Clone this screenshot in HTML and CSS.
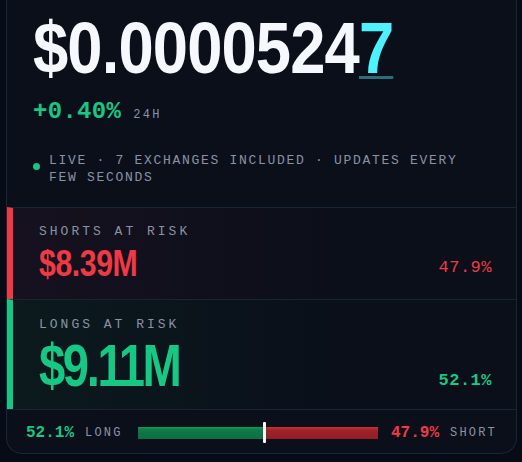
FILE: index.html
```html
<!DOCTYPE html>
<html lang="en">
<head>
<meta charset="utf-8">
<title>Liquidations</title>
<link rel="stylesheet" href="styles.css">
</head>
<body>
<div class="card">
  <div class="head">
    <div class="price"><span class="cond">$0.0000524<span class="tick">7</span></span></div>
    <div class="change"><span class="pct">+0.40%</span><span class="period">24H</span></div>
    <div class="live"><span class="dot"></span><span class="live-text">LIVE · 7 EXCHANGES INCLUDED · UPDATES EVERY FEW SECONDS</span></div>
  </div>
  <div class="risk shorts">
    <div class="risk-main">
      <div class="label">SHORTS AT RISK</div>
      <div class="value"><span class="cond">$8.39M</span></div>
    </div>
    <div class="share">47.9%</div>
  </div>
  <div class="risk longs">
    <div class="risk-main">
      <div class="label">LONGS AT RISK</div>
      <div class="value"><span class="cond">$9.11M</span></div>
    </div>
    <div class="share">52.1%</div>
  </div>
  <div class="ratio">
    <span class="r-pct green">52.1%</span>
    <span class="r-lbl">LONG</span>
    <div class="track">
      <div class="fill-long" style="width:52.1%"></div>
      <div class="marker"></div>
      <div class="fill-short"></div>
    </div>
    <span class="r-pct red">47.9%</span>
    <span class="r-lbl">SHORT</span>
  </div>
</div>
</body>
</html>
```
FILE: styles.css
```css
* { box-sizing: border-box; }
html, body { margin: 0; padding: 0; }
body {
  background: #070b15;
  padding: 0 5px 8px 6px;
  font-family: "Liberation Mono", "DejaVu Sans Mono", monospace;
}
.card {
  background: #0a0f1a;
  border: 1px solid #1c2535;
  border-top: none;
  border-radius: 0 0 16px 16px;
  overflow: hidden;
}
.head {
  padding: 12px 30px 21px 26px;
}
.cond {
  display: inline-block;
  transform-origin: left bottom;
  white-space: nowrap;
}
.price {
  font-family: "Liberation Sans", Arial, sans-serif;
  font-weight: 700;
  font-size: 72px;
  line-height: 72px;
  color: #f5f8ff;
  letter-spacing: -1px;
}
.price .cond { transform: scaleX(0.88); }
.tick {
  color: #4cf2ff;
  text-decoration: underline;
  text-decoration-color: #2a6e79;
  text-decoration-thickness: 3px;
  text-underline-offset: 3px;
}
.change {
  margin-top: 16px;
  display: flex;
  align-items: baseline;
  gap: 12px;
}
.pct {
  font-size: 24px;
  line-height: 24px;
  font-weight: 700;
  color: #17c784;
  letter-spacing: 0.3px;
}
.period {
  font-size: 12px;
  letter-spacing: 2.3px;
  color: #8a93a6;
}
.live {
  margin-top: 28px;
  display: flex;
  align-items: flex-start;
  gap: 9px;
}
.dot {
  flex: none;
  width: 7px;
  height: 7px;
  border-radius: 50%;
  background: #17c784;
  margin-top: 11px;
}
.live-text {
  font-size: 13px;
  line-height: 17px;
  letter-spacing: 1.7px;
  color: #8a93a6;
}
.risk {
  display: flex;
  justify-content: space-between;
  align-items: flex-end;
  border-top: 1px solid #1b2434;
  border-left: 6px solid;
  padding-left: 26px;
  padding-right: 24px;
}
.shorts {
  border-left-color: #ef3a46;
  background: linear-gradient(90deg, #16111e 0%, #0b0f1a 65%);
  padding-top: 16px;
  padding-bottom: 17px;
}
.longs {
  border-left-color: #17c784;
  background: linear-gradient(90deg, #0b1a1d 0%, #0a0f1a 65%);
  padding-top: 17px;
  padding-bottom: 13px;
}
.label {
  font-size: 13px;
  line-height: 16px;
  letter-spacing: 3px;
  color: #8a93a6;
}
.value {
  font-family: "Liberation Sans", Arial, sans-serif;
  font-weight: 700;
}
.shorts .value {
  font-size: 36px;
  line-height: 36px;
  margin-top: 6px;
  color: #ef3a46;
  letter-spacing: -0.5px;
}
.shorts .value .cond { transform: scaleX(0.84); }
.longs .value {
  font-size: 59px;
  line-height: 59px;
  margin-top: 4px;
  color: #17c784;
  letter-spacing: -3px;
}
.longs .value .cond { transform: scaleX(0.8); }
.share {
  font-size: 17px;
  line-height: 20px;
  letter-spacing: 0.5px;
  padding-bottom: 4px;
}
.shorts .share { color: #ef3a46; }
.longs .share { color: #17c784; font-weight: 700; padding-bottom: 5px; }
.ratio {
  display: flex;
  align-items: center;
  border-top: 1px solid #1b2434;
  padding: 2px 19px 0 19px;
  height: 44px;
}
.r-pct {
  font-size: 16px;
  font-weight: 700;
}
.green { color: #17c784; }
.red { color: #ef3a46; margin-left: 13px; }
.r-lbl {
  font-size: 12px;
  letter-spacing: 2.2px;
  color: #8a93a6;
  margin-left: 11px;
}
.track {
  flex: 1;
  margin-left: 15px;
  display: flex;
  align-items: center;
  height: 22px;
}
.fill-long {
  height: 12px;
  background: linear-gradient(180deg, #16985a 0%, #0f7a48 25%, #0d6e42 100%);
}
.marker {
  flex: none;
  width: 3px;
  height: 21px;
  background: #f5f8ff;
  border-radius: 1px;
}
.fill-short {
  flex: 1;
  height: 12px;
  background: linear-gradient(180deg, #c7333a 0%, #a0232b 25%, #8e1f26 100%);
}
```
